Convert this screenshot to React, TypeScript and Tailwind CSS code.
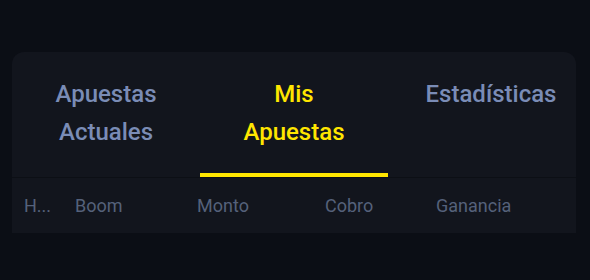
import React from 'react'

const TABS = [
  { label: 'Apuestas Actuales', active: false, extra: '' },
  { label: 'Mis Apuestas', active: true, extra: '' },
  { label: 'Estadísticas', active: false, extra: 'pl-[18px]' },
]

const COLUMNS = [
  { label: 'H...', width: 'w-[51px]' },
  { label: 'Boom', width: 'w-[122px]' },
  { label: 'Monto', width: 'w-[128px]' },
  { label: 'Cobro', width: 'w-[111px]' },
  { label: 'Ganancia', width: 'flex-1' },
]

export default function App() {
  return (
    <div
      className="h-[280px] w-[590px] overflow-hidden bg-[#0b0e15] pt-[52px]"
      style={{ fontFamily: 'Roboto, "Liberation Sans", sans-serif' }}
    >
      <div className="ml-[12px] w-[564px]">
        {/* Tabs */}
        <div className="grid grid-cols-3 rounded-t-xl bg-[#12151d]">
          {TABS.map((tab) => (
            <div key={tab.label} className={`flex flex-col items-center ${tab.extra}`}>
              <div className="h-[121px] pt-[23px]">
                <p
                  className={`w-[120px] text-center text-[24px] font-medium leading-[38px] ${
                    tab.active ? 'text-[#ffe600]' : 'text-[#7a8cb6]'
                  } ${tab.label === 'Estadísticas' ? 'w-auto whitespace-nowrap' : ''}`}
                >
                  {tab.label}
                </p>
              </div>
              <div className={`h-[4px] w-full ${tab.active ? 'bg-[#ffe600]' : 'bg-transparent'}`} />
            </div>
          ))}
        </div>
        <div className="h-[1px] bg-[#0c0f15]" />

        {/* Table header */}
        <div className="flex h-[55px] items-center bg-[#12151d] pl-[12px] text-[18px] text-[#55617a]">
          {COLUMNS.map((col) => (
            <span key={col.label} className={`${col.width} whitespace-nowrap`}>
              {col.label}
            </span>
          ))}
        </div>
      </div>
    </div>
  )
}
